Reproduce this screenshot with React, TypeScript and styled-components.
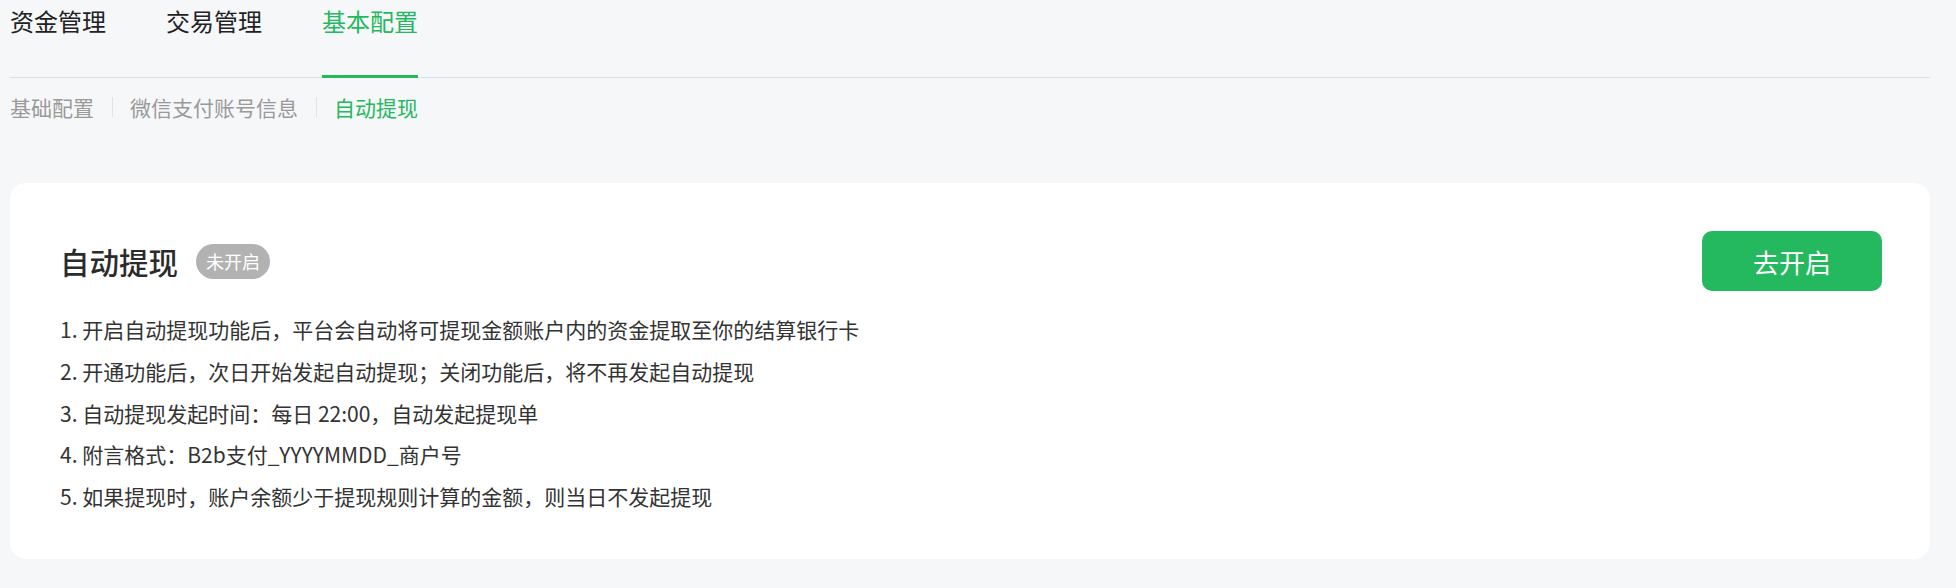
import React from "react";
import styled, { createGlobalStyle } from "styled-components";

const GREEN = "#24b85f";

const GlobalStyle = createGlobalStyle`
  html, body {
    margin: 0;
    padding: 0;
    background: #f6f7f9;
  }
  body {
    font-family: "Noto Sans CJK SC", "Noto Sans", sans-serif;
    color: #333;
  }
  * {
    box-sizing: border-box;
  }
`;

const Page = styled.div`
  min-height: 588px;
  padding: 0 26px 0 10px;
`;

const TabBar = styled.nav`
  display: flex;
  gap: 60px;
  height: 78px;
  border-bottom: 1px solid #dcdde0;
`;

const Tab = styled.div<{ $active?: boolean }>`
  height: 78px;
  margin-bottom: -1px;
  font-size: 24px;
  line-height: 42px;
  color: ${(p) => (p.$active ? GREEN : "#222")};
  border-bottom: 3px solid ${(p) => (p.$active ? GREEN : "transparent")};
  cursor: pointer;
`;

const SubTabs = styled.div`
  display: flex;
  align-items: center;
  margin-top: 14px;
  height: 30px;
`;

const SubTab = styled.span<{ $active?: boolean }>`
  font-size: 21px;
  line-height: 30px;
  color: ${(p) => (p.$active ? GREEN : "#9a9a9a")};
  cursor: pointer;
`;

const Divider = styled.span`
  width: 1px;
  height: 20px;
  margin: 0 17px 0 18px;
  background: #e3e3e3;
`;

const Card = styled.section`
  margin-top: 61px;
  background: #fff;
  border-radius: 16px;
  padding: 48px 48px 41px 50px;
`;

const CardHeader = styled.div`
  display: flex;
  align-items: center;
  justify-content: space-between;
  height: 60px;
`;

const TitleGroup = styled.div`
  display: flex;
  align-items: center;
  gap: 18px;
`;

const Title = styled.h2`
  margin: 0;
  font-size: 29.5px;
  font-weight: 500;
  line-height: 40px;
  color: #2b2b2b;
`;

const Badge = styled.span`
  display: inline-flex;
  align-items: center;
  height: 35px;
  padding: 0 10px;
  border-radius: 18px;
  background: #b2b2b2;
  color: #fff;
  font-size: 18px;
`;

const PrimaryButton = styled.button`
  width: 180px;
  height: 60px;
  border: none;
  border-radius: 10px;
  background: ${GREEN};
  color: #fff;
  font-family: inherit;
  font-size: 26px;
  cursor: pointer;
`;

const RuleList = styled.ol`
  list-style: none;
  margin: 18px 0 0;
  padding: 0;
`;

const Rule = styled.li`
  font-size: 21px;
  line-height: 41.8px;
  color: #333;
`;

const rules = [
  "1. 开启自动提现功能后，平台会自动将可提现金额账户内的资金提取至你的结算银行卡",
  "2. 开通功能后，次日开始发起自动提现；关闭功能后，将不再发起自动提现",
  "3. 自动提现发起时间：每日 22:00，自动发起提现单",
  "4. 附言格式：B2b支付_YYYYMMDD_商户号",
  "5. 如果提现时，账户余额少于提现规则计算的金额，则当日不发起提现",
];

const App: React.FC = () => {
  return (
    <Page>
      <GlobalStyle />
      <TabBar>
        <Tab>资金管理</Tab>
        <Tab>交易管理</Tab>
        <Tab $active>基本配置</Tab>
      </TabBar>
      <SubTabs>
        <SubTab>基础配置</SubTab>
        <Divider />
        <SubTab>微信支付账号信息</SubTab>
        <Divider />
        <SubTab $active>自动提现</SubTab>
      </SubTabs>
      <Card>
        <CardHeader>
          <TitleGroup>
            <Title>自动提现</Title>
            <Badge>未开启</Badge>
          </TitleGroup>
          <PrimaryButton>去开启</PrimaryButton>
        </CardHeader>
        <RuleList>
          {rules.map((r) => (
            <Rule key={r}>{r}</Rule>
          ))}
        </RuleList>
      </Card>
    </Page>
  );
};

export default App;
